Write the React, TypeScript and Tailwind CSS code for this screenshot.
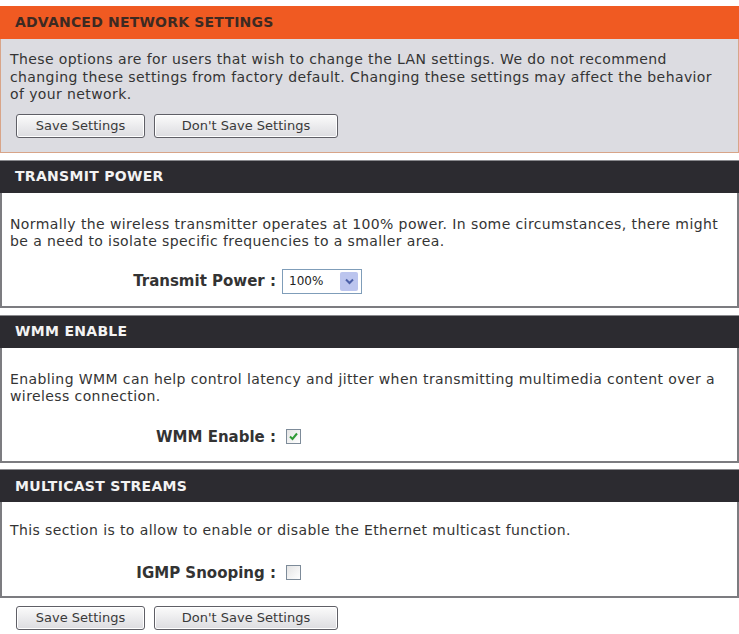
import React from 'react';

const font = "font-['DejaVu_Sans','Verdana',sans-serif]";
const bodyText = 'text-[14px] leading-[17.5px] tracking-[0.4px] text-[#343434]';

function Btn({ label, w }: { label: string; w: string }) {
  return (
    <button
      className={`${w} h-[24px] rounded-[3px] border border-[#5f5f66] bg-gradient-to-b from-[#fbfbfb] to-[#dcdce0] text-[13px] text-[#3a3a3a] shadow-[inset_0_0_0_1px_#fff]`}
    >
      {label}
    </button>
  );
}

function Section({ title, gap, children }: { title: string; gap: string; children: React.ReactNode }) {
  return (
    <div className={gap}>
      <div className="h-[33px] border-t border-[#8a8a8e] bg-[#2c2b30] pl-[15px] flex items-center text-[14px] font-bold tracking-[0.3px] text-[#f3f3f3]">
        {title}
      </div>
      <div className="border-x-2 border-b-2 border-[#7c7c80] bg-white px-[8px]">{children}</div>
    </div>
  );
}

function Row({ label, children }: { label: string; children: React.ReactNode }) {
  return (
    <div className="flex items-center">
      <div className="w-[266px] text-right text-[15px] font-bold text-[#333]">{label} :</div>
      <div className="ml-[6px] flex items-center">{children}</div>
    </div>
  );
}

function Check({ on }: { on?: boolean }) {
  return (
    <span className="ml-[4px] w-[15px] h-[15px] border border-[#7d8b99] bg-gradient-to-br from-[#e4e4e4] to-white flex items-center justify-center">
      {on && (
        <svg width="11" height="11" viewBox="0 0 11 11">
          <path d="M2 5.5 L4.5 8 L9 2.5" fill="none" stroke="#2f9a35" strokeWidth="2" />
        </svg>
      )}
    </span>
  );
}

export default function App() {
  return (
    <div className={`w-[739px] min-h-[634px] bg-white pt-[6px] ${font}`}>
      {/* Intro panel */}
      <div>
        <div className="h-[33px] bg-[#f05a22] pl-[15px] flex items-center text-[14px] font-bold tracking-[0.2px] text-[#3d2a22]">
          ADVANCED NETWORK SETTINGS
        </div>
        <div className="border border-t-0 border-[#d8a488] bg-[#dcdce1] pl-[9px] pr-[10px] pt-[12px] pb-[14px]">
          <p className={bodyText}>
            These options are for users that wish to change the LAN settings. We do not recommend
            changing these settings from factory default. Changing these settings may affect the behavior
            of your network.
          </p>
          <div className="mt-[10px] flex gap-[9px] pl-[6px]">
            <Btn label="Save Settings" w="w-[129px]" />
            <Btn label="Don't Save Settings" w="w-[184px]" />
          </div>
        </div>
      </div>

      <Section title="TRANSMIT POWER" gap="mt-[7px]">
        <p className={`pt-[23px] ${bodyText}`}>
          Normally the wireless transmitter operates at 100% power. In some circumstances, there might
          be a need to isolate specific frequencies to a smaller area.
        </p>
        <div className="mt-[18px] pb-[12px]">
          <Row label="Transmit Power">
            <div className="w-[80px] h-[25px] border border-[#7f9db9] bg-white flex items-center justify-between pl-[6px] pr-[3px]">
              <span className="text-[12px] text-[#222]">100%</span>
              <span className="w-[18px] h-[19px] rounded-[2px] bg-[#bcc5ee] flex items-center justify-center">
                <svg width="9" height="7" viewBox="0 0 9 7">
                  <path d="M1 1.5 L4.5 5 L8 1.5" fill="none" stroke="#4d61a8" strokeWidth="2" />
                </svg>
              </span>
            </div>
          </Row>
        </div>
      </Section>

      <Section title="WMM ENABLE" gap="mt-[7px]">
        <p className={`pt-[23px] ${bodyText}`}>
          Enabling WMM can help control latency and jitter when transmitting multimedia content over a
          wireless connection.
        </p>
        <div className="mt-[20px] pb-[13px]">
          <Row label="WMM Enable">
            <Check on />
          </Row>
        </div>
      </Section>

      <Section title="MULTICAST STREAMS" gap="mt-[6px]">
        <p className={`pt-[20px] ${bodyText}`}>
          This section is to allow to enable or disable the Ethernet multicast function.
        </p>
        <div className="mt-[22px] pb-[12px]">
          <Row label="IGMP Snooping">
            <Check />
          </Row>
        </div>
      </Section>

      <div className="mt-[8px] flex gap-[9px] pl-[16px]">
        <Btn label="Save Settings" w="w-[129px]" />
        <Btn label="Don't Save Settings" w="w-[184px]" />
      </div>
    </div>
  );
}
